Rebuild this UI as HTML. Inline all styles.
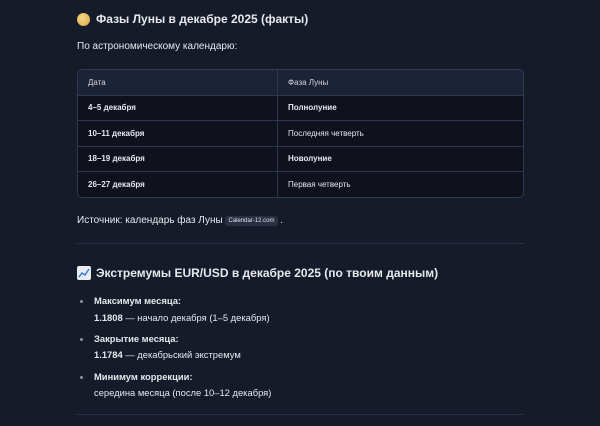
<!DOCTYPE html>
<html><head><meta charset="utf-8"><style>
body{margin:0;background:#161b29;color:#e6e8ee;font-family:"Liberation Sans","DejaVu Sans",sans-serif;width:600px;height:426px;overflow:hidden;position:relative}
.a{position:absolute;white-space:nowrap}
.t{font-size:10px}
table{position:absolute;left:77px;top:69px;width:447px;border-collapse:separate;border-spacing:0;border:1px solid #313a55;border-radius:5px;overflow:hidden;font-size:8px}
td{height:24.5px;padding:0 10px;border-top:1px solid #2e3650;background:#0f121c;color:#e6e8ee}
tr:first-child td{border-top:none;background:#1d2336;color:#cfd3de;font-weight:normal}
td:first-child{border-right:1px solid #2e3650;width:179px;font-weight:bold}
b{font-weight:bold}
.hr{position:absolute;left:77px;width:447px;height:1px;background:#2a3047}
.pill{display:inline-block;background:#2a3042;border-radius:3px;font-size:6px;padding:2px 3px;vertical-align:1px;color:#dfe2ea}
.dot{position:absolute;width:3px;height:3px;border-radius:50%;background:#8a90a0}
.s{font-size:9.4px}
</style></head><body>
<div class="a" style="left:77px;top:13px;width:13px;height:13px;border-radius:50%;background:radial-gradient(circle at 40% 40%,#f7d78a,#d9a33c)"></div>
<div class="a" style="left:96px;top:12px;font-weight:bold;font-size:12px">Фазы Луны в декабре 2025 (факты)</div>
<div class="a t" style="left:77px;top:41px">По астрономическому календарю:</div>
<table>
<tr><td>Дата</td><td>Фаза Луны</td></tr>
<tr><td>4–5 декабря</td><td><b>Полнолуние</b></td></tr>
<tr><td>10–11 декабря</td><td>Последняя четверть</td></tr>
<tr><td>18–19 декабря</td><td><b>Новолуние</b></td></tr>
<tr><td>26–27 декабря</td><td>Первая четверть</td></tr>
</table>
<div class="a t" style="left:77px;top:215px">Источник: календарь фаз Луны <span class="pill">Calendar-12.com</span> .</div>
<div class="hr" style="top:243px"></div>
<svg class="a" style="left:77px;top:266px" width="14" height="14"><rect width="14" height="14" rx="2" fill="#e9ecf3"/><polyline points="2,11 5,7 8,9 12,3" fill="none" stroke="#3b7bd9" stroke-width="1.5"/></svg>
<div class="a" style="left:96px;top:266px;font-weight:bold;font-size:12px">Экстремумы EUR/USD в декабре 2025 (по твоим данным)</div>
<div class="dot" style="left:80px;top:300px"></div>
<div class="a s" style="left:94px;top:295px"><b>Максимум месяца:</b></div>
<div class="a s" style="left:94px;top:312px"><b>1.1808</b> — начало декабря (1–5 декабря)</div>
<div class="dot" style="left:80px;top:338px"></div>
<div class="a s" style="left:94px;top:333px"><b>Закрытие месяца:</b></div>
<div class="a s" style="left:94px;top:349px"><b>1.1784</b> — декабрьский экстремум</div>
<div class="dot" style="left:80px;top:376px"></div>
<div class="a s" style="left:94px;top:371px"><b>Минимум коррекции:</b></div>
<div class="a s" style="left:94px;top:387px">середина месяца (после 10–12 декабря)</div>
<div class="hr" style="top:414px"></div>
</body></html>
